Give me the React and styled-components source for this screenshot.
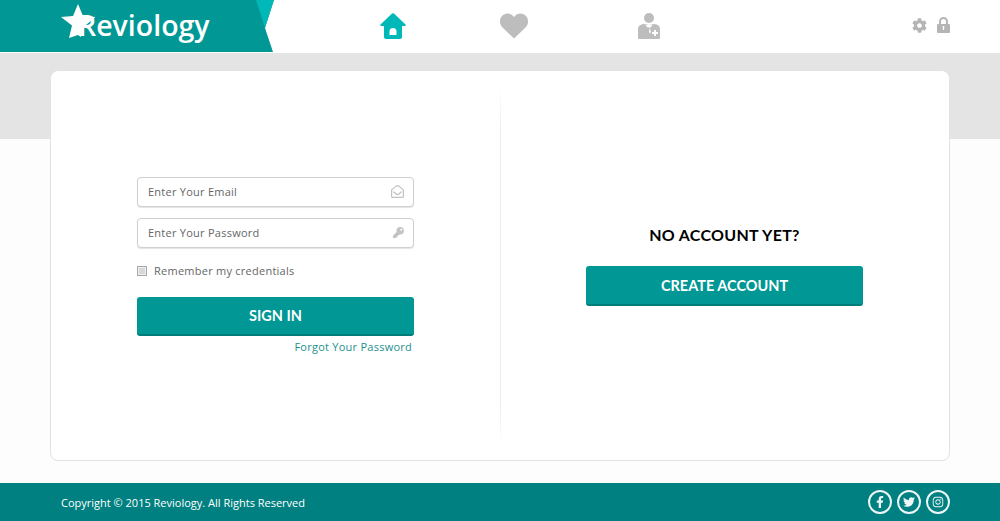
import React from "react";
import styled, { createGlobalStyle } from "styled-components";
import { FaCog, FaKey, FaRegEnvelopeOpen, FaFacebookF, FaTwitter, FaInstagram } from "react-icons/fa";

const GlobalStyle = createGlobalStyle`
  html, body { margin: 0; padding: 0; }
  body { background: #fdfdfd; font-family: "Open Sans", sans-serif; }
  * { box-sizing: border-box; }
`;

const Page = styled.div`
  height: 521px;
  display: flex;
  flex-direction: column;
  overflow: hidden;
`;

const Header = styled.header`
  height: 53px;
  flex: none;
  display: flex;
  background: #fff;
`;

const Brand = styled.div`
  position: relative;
  width: 274px;
  height: 52px;
  flex: none;
  background: #009795;
  clip-path: polygon(0 0, 274px 0, 265px 28px, 273px 52px, 0 52px);
  padding: 6px 0 0 78px;
  color: #fff;
  font-size: 28.5px;
  line-height: 38px;
  font-weight: 600;
  &::after {
    content: "";
    position: absolute;
    top: 0;
    left: 256px;
    width: 18px;
    height: 28px;
    background: #00b8b8;
    clip-path: polygon(0 0, 100% 0, 50% 100%);
  }
`;

const Star = styled.svg`
  position: absolute;
  left: 60px;
  top: 4px;
`;

const Nav = styled.nav`
  flex: 1;
  display: flex;
  align-items: flex-start;
  padding-top: 13px;
  padding-left: 106px;
`;

const NavItem = styled.a`
  display: block;
  width: ${(p) => p.$width}px;
  color: ${(p) => (p.$active ? "#00b8b8" : "#bdbdbd")};
  line-height: 0;
`;

const Tools = styled.div`
  display: flex;
  align-items: center;
  gap: 10px;
  height: 26px;
  padding-right: 50px;
  margin-top: 12px;
  color: #b5b5b5;
`;

const Main = styled.main`
  flex: 1;
  padding-top: 17px;
  background: linear-gradient(to bottom, #e4e4e4 86px, #fdfdfd 86px);
`;

const Card = styled.section`
  width: 900px;
  height: 391px;
  margin: 0 auto;
  display: grid;
  grid-template-columns: 1fr 1fr;
  background: #fff;
  border: 1px solid #e2e2e2;
  border-radius: 8px;
`;

const Panel = styled.div`
  display: flex;
  flex-direction: column;
  justify-content: center;
  padding: 0 86px;
  position: relative;
  & + &::before {
    content: "";
    position: absolute;
    left: 0;
    top: 16px;
    bottom: 14px;
    width: 1px;
    background: linear-gradient(to bottom, #fff, #ececec 12%, #ececec 88%, #fff);
  }
`;

const Field = styled.label`
  display: flex;
  align-items: center;
  height: 30px;
  margin-bottom: 11px;
  padding: 0 9px 0 10px;
  border: 1px solid #cfcfcf;
  border-radius: 4px;
  color: #c2c2c2;
  background: #fff;
  box-shadow: 0 1px 1px #e4e4e4;
`;

const Input = styled.input`
  flex: 1;
  min-width: 0;
  border: 0;
  outline: 0;
  padding: 0;
  background: none;
  font: 400 11px "Open Sans", sans-serif;
  letter-spacing: 0.25px;
  &::placeholder {
    color: #666;
    opacity: 1;
  }
`;

const Remember = styled.label`
  display: flex;
  align-items: center;
  gap: 7px;
  margin: 4px 0 18px;
  color: #666;
  font-size: 11px;
  letter-spacing: 0.25px;
  line-height: 16px;
`;

const Check = styled.span`
  width: 10px;
  height: 10px;
  background: #d8d8d8;
  border: 1px solid #a8a8a8;
  box-shadow: inset 0 0 0 1px #f0f0f0;
`;

const Button = styled.button`
  width: 100%;
  height: ${(p) => p.$height}px;
  border: 0;
  border-bottom: 2px solid #007d7b;
  border-radius: 3px;
  background: #009795;
  color: #fff;
  font: 700 14.5px "Lato", sans-serif;
`;

const Forgot = styled.a`
  align-self: flex-end;
  margin: 3px 2px 0 0;
  color: #1c918f;
  font-size: 11px;
  letter-spacing: 0.25px;
  line-height: 16px;
`;

const Title = styled.h2`
  margin: 0 0 21px;
  color: #000;
  text-align: center;
  font: 700 16px/20px "Lato", sans-serif;
  letter-spacing: 0.3px;
`;

const Footer = styled.footer`
  height: 38px;
  flex: none;
  display: flex;
  align-items: center;
  justify-content: space-between;
  padding: 0 50px 0 61px;
  background: #008080;
  color: #fff;
  font-size: 11px;
`;

const Socials = styled.div`
  display: flex;
  gap: 5px;
`;

const Social = styled.a`
  display: flex;
  align-items: center;
  justify-content: center;
  width: 24px;
  height: 24px;
  border: 2px solid #eef7f7;
  border-radius: 50%;
  color: #eef7f7;
  font-size: 12px;
`;

const App = () => (
  <Page>
    <GlobalStyle />
    <Header>
      <Brand>
        Reviology
        <Star width="36" height="35" viewBox="0 0 36 35">
          <path fill="#fff" d="M18 0l5 12 12.500 1-9.500 8 3 4-6-2-2 1v9l-3-2-9 3 3-12.500L1 13l12-1z" />
        </Star>
      </Brand>
      <Nav>
        <NavItem $active $width={120}>
          <svg width="26" height="26" viewBox="0 0 26 26">
            <path fill="currentColor" d="M12 .6a1.500 1.500 0 0 1 2 0l11.500 10.900c.6.600.2 1.500-.6 1.500H22v11a2 2 0 0 1-2 2H6a2 2 0 0 1-2-2V13H1.100c-.8 0-1.200-.9-.6-1.500z" />
            <path fill="#fff" d="M9.500 22v-3.500a3.500 3.500 0 0 1 7 0V22z" />
          </svg>
        </NavItem>
        <NavItem $width={138}>
          <svg width="28" height="26" viewBox="0 0 28 26">
            <path fill="currentColor" d="M14 25.500L2.500 14.500C-.8 11.300-.8 6 2 3 5-.3 10.500-.5 14 4c3.500-4.500 9-4.300 12-1 2.800 3 2.800 8.300-.5 11.500z" />
          </svg>
        </NavItem>
        <NavItem $width={252}>
          <svg width="22" height="26" viewBox="0 0 22 26">
            <circle fill="currentColor" cx="11" cy="5" r="5" />
            <path fill="currentColor" d="M0 16c0-3 2-4.500 6-5l5 1 5-1c4 .5 6 2 6 5v9a1 1 0 0 1-1 1H1a1 1 0 0 1-1-1z" />
            <path fill="#fff" d="M7.500 12h7l-2 2.500-.8 0 1.300 4.500-1 1.500-1-1.500 .9-4.500-.8 0-1.600-.1-2-2.400z" />
            <path fill="#fff" d="M14 19h2v-2h2v2h2v2h-2v2h-2v-2h-2z" />
          </svg>
        </NavItem>
      </Nav>
      <Tools>
        <FaCog size={15} />
        <svg width="13" height="16" viewBox="0 0 13 16">
          <path fill="currentColor" d="M2 7V4.500a4.500 4.500 0 0 1 9 0V7h1a1 1 0 0 1 1 1v7a1 1 0 0 1-1 1H1a1 1 0 0 1-1-1V8a1 1 0 0 1 1-1zm2 0h5V4.500a2.500 2.500 0 0 0-5 0z" />
          <path fill="#fff" d="M5.500 10a1 1 0 0 1 2 0c0 .4-.2.700-.4.900V13H5.900v-2.100c-.2-.2-.4-.5-.4-.9z" />
        </svg>
      </Tools>
    </Header>
    <Main>
      <Card>
        <Panel>
          <Field>
            <Input placeholder="Enter Your Email" />
            <FaRegEnvelopeOpen size={13} />
          </Field>
          <Field>
            <Input placeholder="Enter Your Password" />
            <FaKey size={11} />
          </Field>
          <Remember>
            <Check />
            Remember my credentials
          </Remember>
          <Button $height={39}>SIGN IN</Button>
          <Forgot>Forgot Your Password</Forgot>
        </Panel>
        <Panel>
          <Title>NO ACCOUNT YET?</Title>
          <Button $height={40}>CREATE ACCOUNT</Button>
        </Panel>
      </Card>
    </Main>
    <Footer>
      <span>Copyright © 2015 Reviology. All Rights Reserved</span>
      <Socials>
        <Social><FaFacebookF /></Social>
        <Social><FaTwitter /></Social>
        <Social><FaInstagram /></Social>
      </Socials>
    </Footer>
  </Page>
);

export default App;
